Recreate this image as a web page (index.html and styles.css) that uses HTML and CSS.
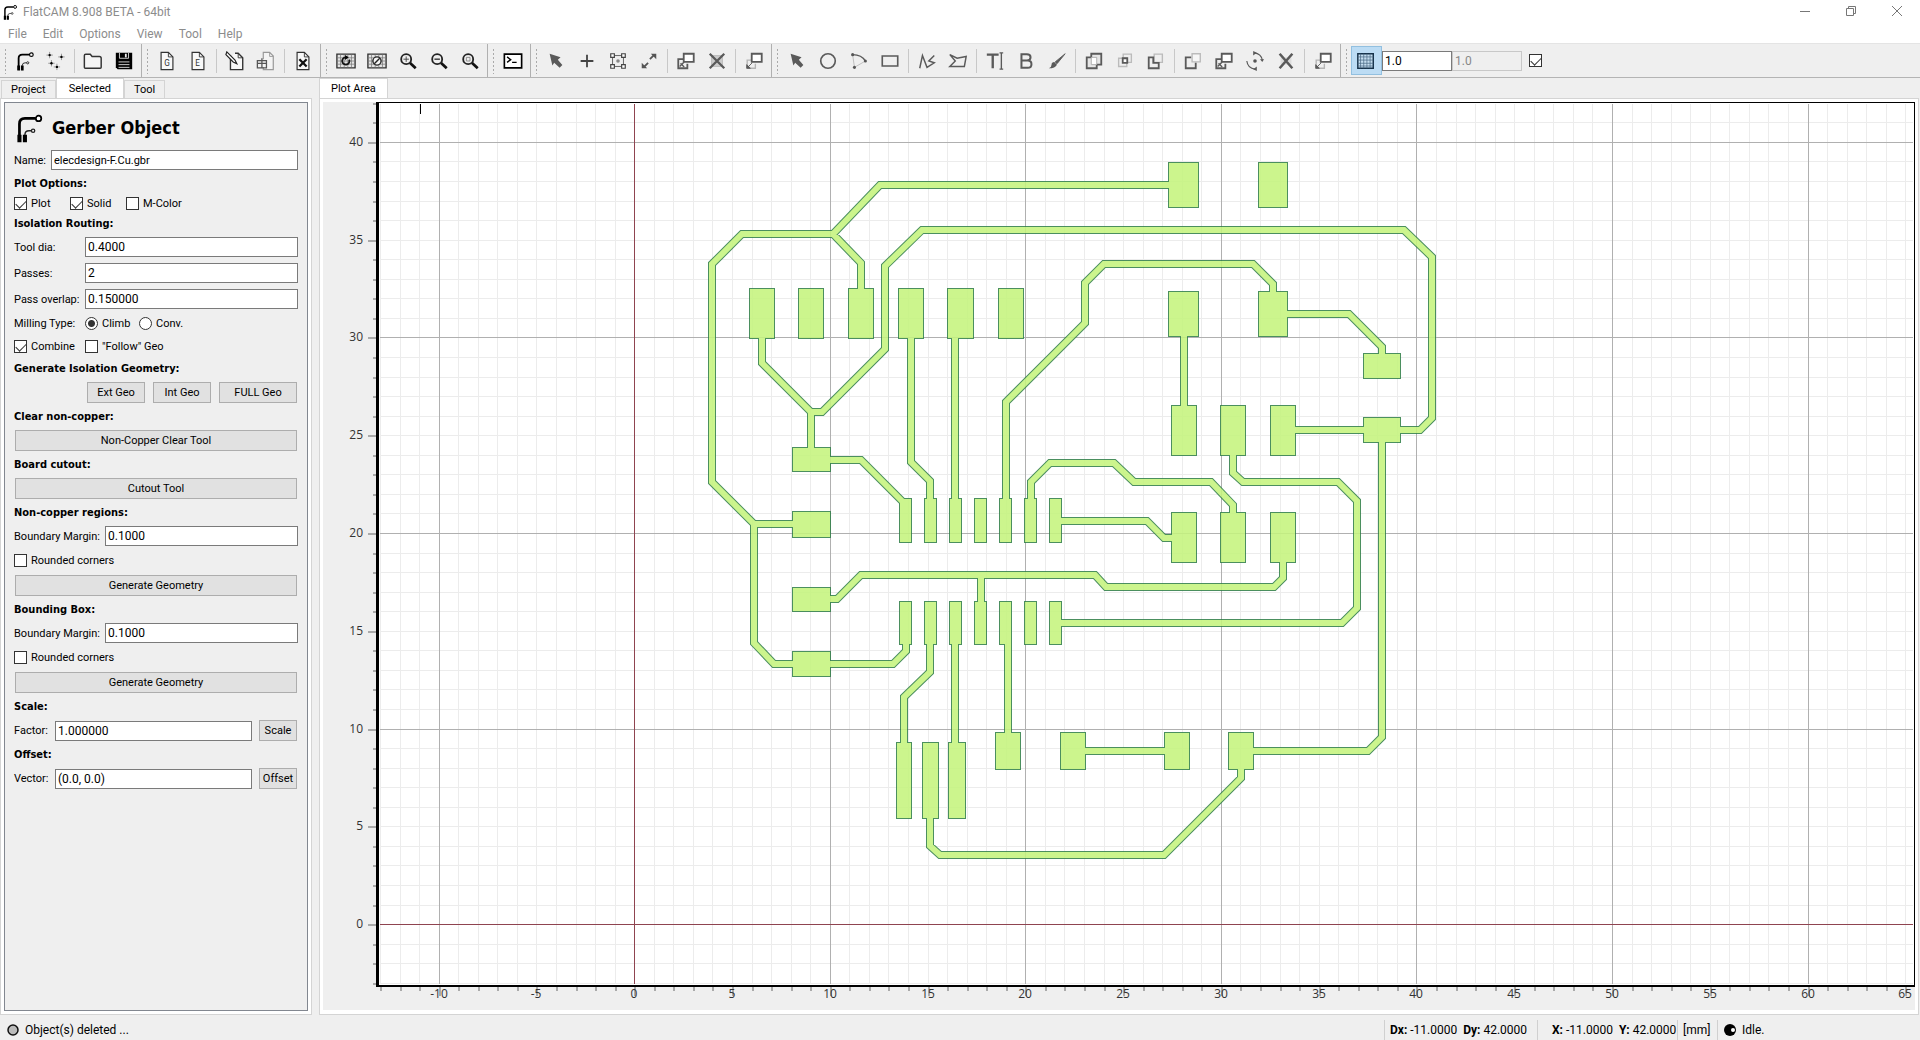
FILE: index.html
```html
<!DOCTYPE html>
<html lang="en">
<head>
<meta charset="UTF-8">
<meta name="viewport" content="width=device-width, initial-scale=1.0">
<title>FlatCAM 8.908 BETA - 64bit</title>
<link rel="stylesheet" href="styles.css">
</head>
<body>

<!-- shared icons -->
<svg class="defs" width="0" height="0">
    <symbol id="i-logo" viewBox="0 0 22 22">
        <path d="M4 21V8q0-4 4-4h8" fill="none" stroke="#000" stroke-width="2"/>
        <path d="M8 21v-5q0-3 3-3h2" fill="none" stroke="#222" stroke-width="1"/>
        <circle cx="18" cy="4" r="2" fill="#fff" stroke="#000" stroke-width="1.3"/>
        <circle cx="14" cy="13" r="1.2" fill="#fff" stroke="#222" stroke-width="1"/>
        <path d="M2.500 16h3v5.500h-3zM6.500 16h3v5.500h-3z" fill="#000"/>
    </symbol>
    <symbol id="i-cursor" viewBox="0 0 22 22">
        <path d="M4 3l12 4-3 2.500 5 6-3 3-6-5.500-2 3z" fill="#5a5a5a"/>
    </symbol>
    <symbol id="i-copy" viewBox="0 0 22 22">
        <path d="M9 9H2.500v10h10v-5" fill="none" stroke="#5a5a5a" stroke-width="2"/>
        <path d="M8.500 3h11v9h-11z" fill="#fff" stroke="#5a5a5a" stroke-width="2"/>
        <path d="M4 17l5-5M5 13.500l4 4" stroke="#5a5a5a" stroke-width="1.500"/>
    </symbol>
    <symbol id="i-move" viewBox="0 0 22 22">
        <path d="M8 10H3.500v9h9v-5" fill="none" stroke="#b5b5b5" stroke-width="1.500"/>
        <path d="M8.500 3h11v9h-11z" fill="#fff" stroke="#5a5a5a" stroke-width="2"/>
        <path d="M4 18l5-5M3 15v4h4z" fill="#5a5a5a" stroke="#5a5a5a"/>
    </symbol>
    <symbol id="i-page" viewBox="0 0 22 22">
        <path d="M4.500 1.500h8l5 5v14h-13z" fill="#f8f8f8" stroke="#333" stroke-width="1.300"/>
        <path d="M12.500 1.500v5h5" fill="none" stroke="#333"/>
    </symbol>
    <symbol id="i-grid" viewBox="0 0 22 22">
        <path d="M1 3.500h20v15H1z" fill="#e4e4e4" stroke="#333" stroke-width="1.500"/>
        <path d="M5 4v14M9 4v14M13 4v14M17 4v14M2 7.500h18M2 11h18M2 14.500h18" stroke="#777" stroke-width=".8" fill="none"/>
    </symbol>
    <symbol id="i-lens" viewBox="0 0 22 22">
        <path d="M13 13l6.500 6" stroke="#111" stroke-width="3"/>
        <circle cx="9" cy="9" r="5.500" fill="#eee" stroke="#222" stroke-width="2"/>
    </symbol>
</svg>

<header class="titlebar">
    <svg class="app-icon"><use href="#i-logo"/></svg>
    <span class="title">FlatCAM 8.908 BETA - 64bit</span>
    <div class="window-buttons">
        <button type="button" aria-label="Minimize"><svg viewBox="0 0 12 12"><path d="M1 6.500h10"/></svg></button>
        <button type="button" aria-label="Restore"><svg viewBox="0 0 12 12"><path d="M1.500 3.500h7v7h-7zM3.500 3.500v-2h7v7h-2"/></svg></button>
        <button type="button" aria-label="Close"><svg viewBox="0 0 12 12"><path d="M1 1l10 10M11 1L1 11"/></svg></button>
    </div>
</header>

<nav class="menubar">
    <a href="#">File</a>
    <a href="#">Edit</a>
    <a href="#">Options</a>
    <a href="#">View</a>
    <a href="#">Tool</a>
    <a href="#">Help</a>
</nav>

<div class="toolbar">
    <div class="group">
        <i class="handle"></i>
        <button type="button" aria-label="Open Gerber"><svg><use href="#i-logo"/></svg></button>
        <button type="button" aria-label="Open Excellon"><svg viewBox="0 0 22 22"><path d="M4 1v7M.500 4.500h7M17 3v7M13.500 6.500h7M6 10v7M2.500 13.500h7M12 14v7M8.500 17.500h7" stroke="#777" stroke-width=".8"/><circle cx="4" cy="4.500" r="1.300"/><circle cx="17" cy="6.500" r="1.300"/><circle cx="6" cy="13.500" r="1.300"/><circle cx="12" cy="17.500" r="1.300"/></svg></button>
        <i class="sep"></i>
        <button type="button" aria-label="Open project"><svg viewBox="0 0 22 22"><path d="M1.500 18V5q0-1.500 1.500-1.500h5l2 2.500h8q2 0 2 2v10q0 1-1 1H2.500q-1 0-1-1z" fill="#f5f5f5" stroke="#333" stroke-width="1.600"/></svg></button>
        <button type="button" aria-label="Save project"><svg viewBox="0 0 22 22"><path d="M2 2h18v18H4l-2-2z" fill="#000"/><path d="M6 2v6h10V2M5 12h12M5 15h12M5 18h12" fill="none" stroke="#ddd"/><path d="M12 3h2v4h-2z" fill="#eee"/></svg></button>
    </div>
    <div class="group">
        <i class="handle"></i>
        <button type="button" aria-label="New geometry"><svg viewBox="0 0 22 22"><use href="#i-page"/><text x="8" y="16">G</text></svg></button>
        <button type="button" aria-label="New excellon"><svg viewBox="0 0 22 22"><use href="#i-page"/><text x="8" y="16">E</text></svg></button>
        <i class="sep"></i>
        <button type="button" aria-label="Edit object"><svg viewBox="0 0 22 22"><path d="M7 6H6v14.500h13.500v-13l-5-5H11" fill="#f8f8f8" stroke="#333" stroke-width="1.500"/><path d="M14.500 2.500v5h5" fill="none" stroke="#333"/><path d="M2 1l9 9 2 4-4-2L1 4z" fill="#fff" stroke="#222" stroke-width="1.300"/></svg></button>
        <button type="button" aria-label="Update object"><svg viewBox="0 0 22 22"><path d="M8 9V1.500h7l4 4v15H8v-3" fill="#f4f4f4" stroke="#999" stroke-width="1.300"/><path d="M15 2v4h4" fill="none" stroke="#999"/><path d="M1.500 10.500h10v8h-10zM1.500 13.500h10M6.500 8v10" fill="none" stroke="#555" stroke-width="1.400"/></svg></button>
        <i class="sep"></i>
        <button type="button" aria-label="Delete"><svg viewBox="0 0 22 22"><use href="#i-page"/><path d="M7 9l8 8M15 9l-8 8" stroke="#111" stroke-width="2.500"/></svg></button>
    </div>
    <div class="group">
        <i class="handle"></i>
        <button type="button" aria-label="Replot"><svg viewBox="0 0 22 22"><use href="#i-grid"/><path d="M14.500 9.500a4 4 0 1 1-4-2.500" fill="none" stroke="#111" stroke-width="2"/><path d="M10 4.500l4 2.500-4 3z"/></svg></button>
        <button type="button" aria-label="Clear plot"><svg viewBox="0 0 22 22"><use href="#i-grid"/><circle cx="11" cy="11" r="4.500" fill="#f4f4f4" stroke="#222" stroke-width="1.500"/><path d="M8 14l6-6" stroke="#222" stroke-width="1.500"/></svg></button>
        <button type="button" aria-label="Zoom in"><svg viewBox="0 0 22 22"><use href="#i-lens"/><path d="M6 9h6M9 6v6" stroke="#444"/></svg></button>
        <button type="button" aria-label="Zoom out"><svg viewBox="0 0 22 22"><use href="#i-lens"/><path d="M6 9h6" stroke="#333" stroke-width="1.500"/></svg></button>
        <button type="button" aria-label="Zoom fit"><svg viewBox="0 0 22 22"><use href="#i-lens"/><path d="M7 7h4v4H7z" fill="none" stroke="#888"/></svg></button>
    </div>
    <div class="group">
        <i class="handle"></i>
        <button type="button" aria-label="Command line"><svg viewBox="0 0 22 22"><path d="M1.500 3.500h19v15h-19z" fill="#fff" stroke="#000" stroke-width="1.800"/><path d="M4.500 6.500l4 3-4 3M10 12.500h5" fill="none" stroke="#000" stroke-width="1.500"/></svg></button>
    </div>
    <div class="group">
        <i class="handle"></i>
        <button type="button" aria-label="Select drill"><svg><use href="#i-cursor"/></svg></button>
        <button type="button" aria-label="Add drill"><svg viewBox="0 0 22 22"><path d="M11 4v14M4 11h14" stroke="#444" stroke-width="2"/></svg></button>
        <button type="button" aria-label="Drill array"><svg viewBox="0 0 22 22"><path d="M7 5h8M7 17h8M5 7v8M17 7v8" stroke="#5a5a5a"/><path d="M3 3h4v4H3zM15 3h4v4h-4zM3 15h4v4H3zM15 15h4v4h-4z" fill="#fff" stroke="#444" stroke-width="1.300"/><circle cx="11" cy="11" r="2" fill="#888"/></svg></button>
        <button type="button" aria-label="Resize drill"><svg viewBox="0 0 22 22"><path d="M12 9l5-5M10 13l-5 5" stroke="#555" stroke-width="2"/><path d="M19 3v6l-6-6zM3 19v-6l6 6z" fill="#555"/></svg></button>
        <i class="sep"></i>
        <button type="button" aria-label="Copy drill"><svg><use href="#i-copy"/></svg></button>
        <button type="button" aria-label="Delete drill"><svg viewBox="0 0 22 22"><path d="M5 5h12v12H5z" fill="#ccc" stroke="#bbb"/><path d="M3 3l16 16M19 3L3 19" stroke="#5a5a5a" stroke-width="2.500"/></svg></button>
        <i class="sep"></i>
        <button type="button" aria-label="Move drill"><svg><use href="#i-move"/></svg></button>
    </div>
    <div class="group">
        <i class="handle"></i>
        <button type="button" aria-label="Select shape"><svg><use href="#i-cursor"/></svg></button>
        <button type="button" aria-label="Circle"><svg viewBox="0 0 22 22"><circle cx="11" cy="11" r="8" fill="none" stroke="#5a5a5a" stroke-width="1.800"/></svg></button>
        <button type="button" aria-label="Arc"><svg viewBox="0 0 22 22"><path d="M4 4q10 0 14 7" fill="none" stroke="#5a5a5a" stroke-width="1.500"/><path d="M18 11L6 18M4 4l2 14" stroke="#bbb"/><circle cx="4" cy="4" r="1.700" fill="#555"/><circle cx="18" cy="11" r="1.700" fill="#555"/><circle cx="6" cy="18" r="1.700" fill="#555"/></svg></button>
        <button type="button" aria-label="Rectangle"><svg viewBox="0 0 22 22"><path d="M2.500 5.500h17v11h-17z" fill="none" stroke="#5a5a5a" stroke-width="1.800"/></svg></button>
        <i class="sep"></i>
        <button type="button" aria-label="Path"><svg viewBox="0 0 22 22"><path d="M3 19L6 5l5 13 8-5-6-2 6-6" fill="none" stroke="#5a5a5a" stroke-width="1.600"/></svg></button>
        <button type="button" aria-label="Polygon"><svg viewBox="0 0 22 22"><path d="M2 4l8 4 10-2-2 11H2l6-6z" fill="none" stroke="#5a5a5a" stroke-width="1.600"/></svg></button>
        <i class="sep"></i>
        <button type="button" aria-label="Text"><svg viewBox="0 0 22 22"><path d="M2 4h13M8.500 4v15" fill="none" stroke="#5a5a5a" stroke-width="2.600"/><path d="M18 2v18M16 2h4M16 20h4" fill="none" stroke="#5a5a5a" stroke-width="1.500"/></svg></button>
        <button type="button" aria-label="Buffer"><svg viewBox="0 0 22 22"><path d="M6 3.500h6q4 0 4 3.500t-4 3.500H6zM6 10.500h7q4 0 4 4t-4 4H6z" fill="none" stroke="#5a5a5a" stroke-width="2.200"/></svg></button>
        <button type="button" aria-label="Paint"><svg viewBox="0 0 22 22"><path d="M20 3l-9 11-2-2z" fill="#5a5a5a" stroke="#5a5a5a"/><path d="M8 12l3 3q-2 4-9 4 3-1 3-4t3-3z" fill="#5a5a5a"/></svg></button>
        <i class="sep"></i>
        <button type="button" aria-label="Union"><svg viewBox="0 0 22 22"><path d="M8 3h11v12h-5v4H3V7h5z" fill="#e6e6e6" stroke="#5a5a5a" stroke-width="2"/><path d="M8 7h6v8H8z" fill="#fff" stroke="#aaa"/></svg></button>
        <button type="button" aria-label="Intersection"><svg viewBox="0 0 22 22"><path d="M9 3.500h9v9H9zM4 8h9v9H4z" fill="none" stroke="#bbb" stroke-width="1.500"/><path d="M8.500 8h5v5h-5z" fill="#fff" stroke="#5a5a5a" stroke-width="2"/></svg></button>
        <button type="button" aria-label="Subtraction"><svg viewBox="0 0 22 22"><path d="M9 3.500h9v9H9z" fill="none" stroke="#bbb" stroke-width="1.500"/><path d="M3 7h5v6h6v6H3z" fill="none" stroke="#5a5a5a" stroke-width="2"/></svg></button>
        <i class="sep"></i>
        <button type="button" aria-label="Cut path"><svg viewBox="0 0 22 22"><path d="M10 3h9v9h-9z" fill="#f6f6f6" stroke="#bbb" stroke-width="1.500"/><path d="M9 7H3v12h11v-6" fill="none" stroke="#5a5a5a" stroke-width="2"/></svg></button>
        <button type="button" aria-label="Copy shape"><svg><use href="#i-copy"/></svg></button>
        <button type="button" aria-label="Rotate"><svg viewBox="0 0 22 22"><path d="M10 2q8 1 9 8M2 11q1 8 9 9" fill="none" stroke="#5a5a5a" stroke-width="1.300"/><path d="M9 0v5l4-3zM13 17v5l-4-2zM16.500 9h4.500l-2 3z" fill="#5a5a5a"/><circle cx="11" cy="11" r="2" fill="#555"/></svg></button>
        <button type="button" aria-label="Delete shape"><svg viewBox="0 0 22 22"><path d="M5 7h12v8H5z" fill="#ddd"/><path d="M4 3l14 16M18 3L4 19" stroke="#5a5a5a" stroke-width="2.800"/></svg></button>
        <i class="sep"></i>
        <button type="button" aria-label="Move shape"><svg><use href="#i-move"/></svg></button>
    </div>
    <div class="snap">
        <i class="handle"></i>
        <button type="button" class="active" aria-label="Snap to grid"><svg viewBox="0 0 22 22"><path d="M2 3h17v16H2z" fill="#c5def0" stroke="#16324a" stroke-width="1.600"/><path d="M5 3v16M8.500 3v16M12 3v16M15.500 3v16M2 6.500h17M2 10h17M2 13.500h17M2 16.500h17" stroke="#4a6a86" stroke-width=".8"/></svg></button>
        <input type="text" value="1.0" aria-label="Grid X">
        <input type="text" value="1.0" aria-label="Grid Y" disabled>
        <input type="checkbox" aria-label="Link grid" checked>
    </div>
</div>

<main class="workspace">
    <section class="side">
        <div class="tabs">
            <button type="button">Project</button>
            <button type="button" class="current">Selected</button>
            <button type="button">Tool</button>
        </div>
        <div class="pane">
            <form class="properties">
                <div class="heading">
                    <svg><use href="#i-logo"/></svg>
                    <h1>Gerber Object</h1>
                </div>
                <div class="row name">
                    <label for="name">Name:</label>
                    <input type="text" id="name" value="elecdesign-F.Cu.gbr">
                </div>

                <h2>Plot Options:</h2>
                <div class="checks plot-options">
                    <label><input type="checkbox" checked>Plot</label>
                    <label><input type="checkbox" checked>Solid</label>
                    <label><input type="checkbox">M-Color</label>
                </div>

                <h2>Isolation Routing:</h2>
                <div class="row routing">
                    <label for="dia">Tool dia:</label>
                    <input type="text" id="dia" value="0.4000">
                </div>
                <div class="row routing">
                    <label for="passes">Passes:</label>
                    <input type="text" id="passes" value="2">
                </div>
                <div class="row routing">
                    <label for="overlap">Pass overlap:</label>
                    <input type="text" id="overlap" value="0.150000">
                </div>
                <div class="checks milling">
                    <span>Milling Type:</span>
                    <label><input type="radio" name="milling" checked>Climb</label>
                    <label><input type="radio" name="milling">Conv.</label>
                </div>
                <div class="checks milling">
                    <label><input type="checkbox" checked>Combine</label>
                    <label><input type="checkbox">"Follow" Geo</label>
                </div>

                <h2>Generate Isolation Geometry:</h2>
                <div class="geo-buttons">
                    <button type="button">Ext Geo</button>
                    <button type="button">Int Geo</button>
                    <button type="button" class="full">FULL Geo</button>
                </div>

                <h2>Clear non-copper:</h2>
                <button type="button">Non-Copper Clear Tool</button>

                <h2>Board cutout:</h2>
                <button type="button">Cutout Tool</button>

                <h2>Non-copper regions:</h2>
                <div class="row margin">
                    <label for="margin1">Boundary Margin:</label>
                    <input type="text" id="margin1" value="0.1000">
                </div>
                <div class="checks">
                    <label><input type="checkbox">Rounded corners</label>
                </div>
                <button type="button">Generate Geometry</button>

                <h2>Bounding Box:</h2>
                <div class="row margin">
                    <label for="margin2">Boundary Margin:</label>
                    <input type="text" id="margin2" value="0.1000">
                </div>
                <div class="checks">
                    <label><input type="checkbox">Rounded corners</label>
                </div>
                <button type="button">Generate Geometry</button>

                <h2>Scale:</h2>
                <div class="row transform">
                    <label for="factor">Factor:</label>
                    <input type="text" id="factor" value="1.000000">
                    <button type="button">Scale</button>
                </div>

                <h2>Offset:</h2>
                <div class="row transform">
                    <label for="vector">Vector:</label>
                    <input type="text" id="vector" value="(0.0, 0.0)">
                    <button type="button">Offset</button>
                </div>
            </form>
        </div>
    </section>

    <section class="plot">
        <div class="tabs">
            <button type="button" class="current">Plot Area</button>
        </div>
        <div class="pane">
            <svg class="canvas" viewBox="323 102 1592 908" preserveAspectRatio="xMinYMin meet">
                <defs>
                    <path id="traces" d="M1170 185H880L833 234H742L712 264V482L754 524V643L774 664H893L906 651V643
                        M833 234L861 263V290 M754 524H794
                        M762 337V363L811 412H822L885 349V266L922 230H1404L1432 257V418L1420 430H1399 M811 412V449
                        M829 460H861L904 503 M911 337V462L930 481V500 M955 337V500
                        M1006 500V402L1085 323V283L1104 264H1253L1273 284V293
                        M1286 314H1349L1382 347V355 M1184 335V407
                        M1294 430H1365 M1382 441V737L1368 751H1252
                        M1233 454V473L1243 482H1338L1357 501V608L1342 623H1060
                        M1031 500V482L1050 463H1114L1134 482H1211L1233 505V514
                        M1060 521H1147L1164 538H1173
                        M829 599H837L861 575H1095L1106 587H1274L1283 578V561 M981 575V603
                        M930 643V672L904 697V744 M955 643V744 M1008 643V734 M1084 751H1166
                        M1241 768V778L1164 855H940L930 846V817"/>
                    <path id="pads" d="M750 289h24v49h-24z M799 289h24v49h-24z M849 289h24v49h-24z M899 289h24v49h-24z M948 289h25v49h-25z M999 289h24v49h-24z
                        M793 448h37v23h-37z M793 512h37v25h-37z M793 588h37v23h-37z M793 652h37v24h-37z
                        M900 499h11v43h-11z M925 499h11v43h-11z M950 499h11v43h-11z M975 499h11v43h-11z M1000 499h11v43h-11z M1025 499h11v43h-11z M1050 499h11v43h-11z
                        M900 602h11v42h-11z M925 602h11v42h-11z M950 602h11v42h-11z M975 602h11v42h-11z M1000 602h11v42h-11z M1025 602h11v42h-11z M1050 602h11v42h-11z
                        M897 743h14v75h-14z M923 743h15v75h-15z M949 743h16v75h-16z
                        M996 733h24v36h-24z M1061 733h24v36h-24z M1165 733h24v36h-24z M1229 733h24v36h-24z
                        M1172 513h24v49h-24z M1221 513h24v49h-24z M1271 513h24v49h-24z
                        M1172 406h24v49h-24z M1221 406h24v49h-24z M1271 406h24v49h-24z
                        M1169 163h29v44h-29z M1259 163h28v44h-28z M1169 292h29v44h-29z M1259 292h28v44h-28z
                        M1364 354h36v24h-36z M1364 418h36v24h-36z"/>
                </defs>
                <rect class="sheet" x="378" y="103" width="1536" height="882"/>
                <g id="grid"></g>
                <g class="copper">
                    <g class="edge"><use href="#traces"/><use href="#pads"/></g>
                    <use class="trace-fill" href="#traces"/>
                    <use class="pad-fill" href="#pads"/>
                </g>
                <path class="frame" d="M376 102h1539v1H379V985h1535V103h1V987H376z"/>
                <path class="pointer" d="M420 104h1v10h-1z"/>
                <g id="axes"></g>
            </svg>
        </div>
    </section>
</main>

<footer class="statusbar">
    <svg class="led" viewBox="0 0 14 14"><circle cx="7" cy="7" r="5" fill="#bbb" stroke="#111" stroke-width="1.500"/></svg>
    <span class="message">Object(s) deleted ...</span>
    <div class="cell delta"><span><b>Dx:</b> -11.0000</span><span><b>Dy:</b> 42.0000</span></div>
    <div class="cell position"><span><b>X:</b> -11.0000</span><span><b>Y:</b> 42.0000</span></div>
    <div class="cell units">[mm]</div>
    <div class="cell state">
        <svg class="led" viewBox="0 0 14 14"><circle cx="7" cy="7" r="6"/><circle cx="10" cy="7" r="2" fill="#fff"/></svg>
        Idle.
    </div>
</footer>

<script>
    const STEP = 19.555;
    const ORIGIN = { x: 634.7, y: 924.6 };

    let grid = '';
    let zero = '';
    let axes = '';

    function rect(cls, x, y, w, h) {
        return `<rect class="${cls}" x="${x}" y="${y}" width="${w}" height="${h}"/>`;
    }

    for (let i = -13; i <= 65; i++) {
        const x = Math.floor(ORIGIN.x + i * STEP);
        if (i === 0) {
            zero += rect('zero', x, 104, 1, 880);
        } else {
            const line = rect(i % 10 ? 'minor' : 'major', x, 104, 1, 880);
            grid = i % 10 ? line + grid : grid + line;
        }
        axes += rect('tick', x, 987, 2, i % 5 ? 4 : 9);
        if (i % 5 === 0) {
            axes += `<text x="${x}" y="998" text-anchor="middle">${i}</text>`;
        }
    }

    for (let i = -3; i <= 42; i++) {
        const y = Math.floor(ORIGIN.y - i * STEP);
        if (i === 0) {
            zero += rect('zero', 380, y, 1533, 1);
        } else if (i < 42) {
            const line = rect(i % 10 ? 'minor' : 'major', 380, y, 1533, 1);
            grid = i % 10 ? line + grid : grid + line;
        }
        const len = i % 5 ? 3 : 8;
        axes += rect('tick', 376 - len, y, len, 2);
        if (i % 5 === 0) {
            axes += `<text x="363" y="${y + 4}" text-anchor="end">${i}</text>`;
        }
    }

    document.getElementById('grid').innerHTML = grid + zero;
    document.getElementById('axes').innerHTML = axes;
</script>
</body>
</html>
```
FILE: styles.css
```css
* {
    box-sizing: border-box;
}

body {
    margin: 0;
    min-height: 100vh;
    display: flex;
    flex-direction: column;
    background-color: #efefef;
    color: #000;
    font-family: Roboto, "Liberation Sans", sans-serif;
    font-size: 11px;
}

button,
input {
    font-family: inherit;
    font-size: inherit;
    color: inherit;
    margin: 0;
}

.defs {
    position: absolute;
}

/* title and menu */
.titlebar {
    display: flex;
    align-items: center;
    height: 24px;
    padding-left: 2px;
    background-color: #fff;
    color: #8c8c8c;
    font-size: 12px;
}

.app-icon {
    width: 16px;
    height: 16px;
    margin-right: 5px;
}

.window-buttons {
    display: flex;
    margin-left: auto;
}

.window-buttons button {
    width: 46px;
    height: 20px;
    padding: 0;
    border: none;
    background: none;
}

.window-buttons svg {
    width: 12px;
    height: 12px;
    fill: none;
    stroke: #777;
}

.menubar {
    display: flex;
    height: 19px;
    background-color: #fff;
    font-size: 12px;
    line-height: 20px;
}

.menubar a {
    padding: 0 8px;
    color: #8c8c8c;
    text-decoration: none;
}

/* toolbar */
.toolbar {
    display: flex;
    height: 35px;
    border-top: 1px solid #e4e4e4;
    border-bottom: 1px solid #b4b4b4;
}

.group,
.snap {
    display: flex;
    align-items: center;
    flex: none;
}

.group {
    padding-right: 1px;
    border-right: 1px solid #b0b0b0;
}

.handle {
    width: 3px;
    height: 26px;
    margin: 0 3px 0 4px;
    background: radial-gradient(circle, #aaa 1px, transparent 1px) 0 0 / 3px 4px;
}

.sep {
    width: 1px;
    height: 24px;
    margin: 0 3px 0 2px;
    background-color: #c8c8c8;
}

.toolbar button {
    display: flex;
    align-items: center;
    justify-content: center;
    width: 31px;
    height: 29px;
    padding: 0 1px 0 0;
    border: none;
    background: none;
}

.toolbar button svg {
    width: 22px;
    height: 20px;
}

.toolbar text {
    font-size: 9px;
    fill: #333;
}

.toolbar .active {
    background-color: #bcdcf4;
    border: 1px solid #92c0e0;
}

.snap input[type="text"] {
    width: 70px;
}

.snap input[type="checkbox"] {
    margin-left: 7px;
}

/* form controls */
input[type="text"] {
    height: 20px;
    min-width: 0;
    padding: 0 2px;
    border: 1px solid #7a7a7a;
    background-color: #fff;
    font-size: 12px;
}

input[type="text"]:disabled {
    border-color: #c8c8c8;
    background-color: #efefef;
    color: #888;
}

input[type="checkbox"],
input[type="radio"] {
    appearance: none;
    flex: none;
    width: 13px;
    height: 13px;
    border: 1px solid #333;
    background-color: #fff;
}

input[type="radio"] {
    border-radius: 50%;
}

input[type="radio"]:checked {
    background: radial-gradient(circle, #333 3px, #fff 4px);
}

input[type="checkbox"]:checked::before {
    content: "";
    display: block;
    width: 9px;
    height: 5px;
    margin: 2px 0 0 1px;
    border-left: 1px solid #333;
    border-bottom: 1px solid #333;
    transform: rotate(-45deg);
}

/* panes */
.workspace {
    flex: 1;
    display: flex;
    gap: 7px;
    padding-right: 1px;
}

.side {
    display: flex;
    flex-direction: column;
    width: 312px;
    flex: none;
}

.plot {
    display: flex;
    flex-direction: column;
    flex: 1;
    min-width: 0;
}

.tabs {
    display: flex;
    align-items: flex-end;
    height: 21px;
    margin-bottom: -1px;
}

.tabs button {
    height: 19px;
    padding: 0 9px;
    border: 1px solid #d4d4d4;
    border-bottom-color: #b8b8b8;
    background-color: #efefef;
}

.tabs .current {
    height: 21px;
    padding: 0 11px;
    border-bottom-color: #fff;
    background-color: #fff;
}

.side .tabs {
    padding-left: 1px;
}

.side .tabs .current {
    padding: 0 12px;
}

.pane {
    flex: 1;
    padding: 3px;
    border: 1px solid #d4d4d4;
    background-color: #fff;
}

.side .pane {
    display: flex;
}

/* object properties */
.properties {
    flex: 1;
    display: flex;
    flex-direction: column;
    gap: 6px;
    padding: 9px;
    border: 1px solid #828790;
    background-color: #efefef;
}

.heading {
    display: flex;
    align-items: center;
    gap: 8px;
    height: 32px;
}

.heading svg {
    width: 30px;
    height: 30px;
}

h1,
h2 {
    margin: 0;
    font-family: "DejaVu Sans Condensed", "Open Sans", sans-serif;
}

h1 {
    font-size: 18px;
    line-height: 20px;
}

h2 {
    font-size: 11px;
    line-height: 15px;
}

.row {
    display: grid;
    align-items: center;
}

.name {
    grid-template-columns: 37px 1fr;
}

.name input[type="text"] {
    font-size: 11px;
}

.routing {
    grid-template-columns: 71px 1fr;
}

.margin {
    grid-template-columns: 91px 1fr;
}

.transform {
    grid-template-columns: 41px 1fr 46px;
    height: 21px;
}

.transform button {
    margin-left: 7px;
}

.checks {
    display: flex;
    align-items: center;
    height: 17px;
}

.checks label {
    display: flex;
    align-items: center;
    gap: 4px;
    min-width: 54px;
}

.plot-options {
    height: 13px;
}

.plot-options label {
    min-width: 56px;
}

.milling > :first-child {
    width: 71px;
}

.properties button {
    height: 21px;
    padding: 0;
    border: 1px solid #adadad;
    background-color: #e1e1e1;
}

.properties > button {
    margin: 0 1px;
}

.transform button {
    margin-right: 1px;
}

.geo-buttons {
    display: flex;
    justify-content: flex-end;
    gap: 8px;
    margin-right: 1px;
}

.geo-buttons button {
    width: 58px;
}

.geo-buttons .full {
    width: 78px;
}

/* board plot */
.canvas {
    display: block;
    width: 100%;
    background-color: #efefef;
}

.canvas text {
    font-family: "Open Sans", sans-serif;
    font-size: 12px;
    fill: #333;
}

.sheet {
    fill: #fff;
}

.minor {
    fill: #ececec;
}

.major {
    fill: #b0b0b0;
}

.zero {
    fill: #8f4450;
}

.tick {
    fill: #aaa;
}

.copper {
    opacity: 0.88;
    fill: none;
}

.edge {
    stroke: #33804a;
    stroke-width: 8px;
}

.edge use:last-child {
    stroke-width: 2px;
}

.trace-fill {
    stroke: #c5f47e;
    stroke-width: 6px;
}

.pad-fill {
    fill: #c5f47e;
}

/* status bar */
.statusbar {
    display: flex;
    align-items: center;
    height: 25px;
    padding: 4px 153px 0 6px;
    font-size: 12px;
}

.led {
    width: 14px;
    height: 14px;
    margin-right: 5px;
}

.message {
    margin-right: auto;
}

.cell {
    display: flex;
    align-items: center;
    height: 20px;
    padding-left: 5px;
    border-left: 1px solid #d0d0d0;
    white-space: nowrap;
}

.cell span + span {
    margin-left: 6px;
}

.delta {
    width: 153px;
}

.position {
    width: 140px;
    padding-left: 14px;
}

.units {
    width: 40px;
}

.state {
    width: 50px;
}
```
